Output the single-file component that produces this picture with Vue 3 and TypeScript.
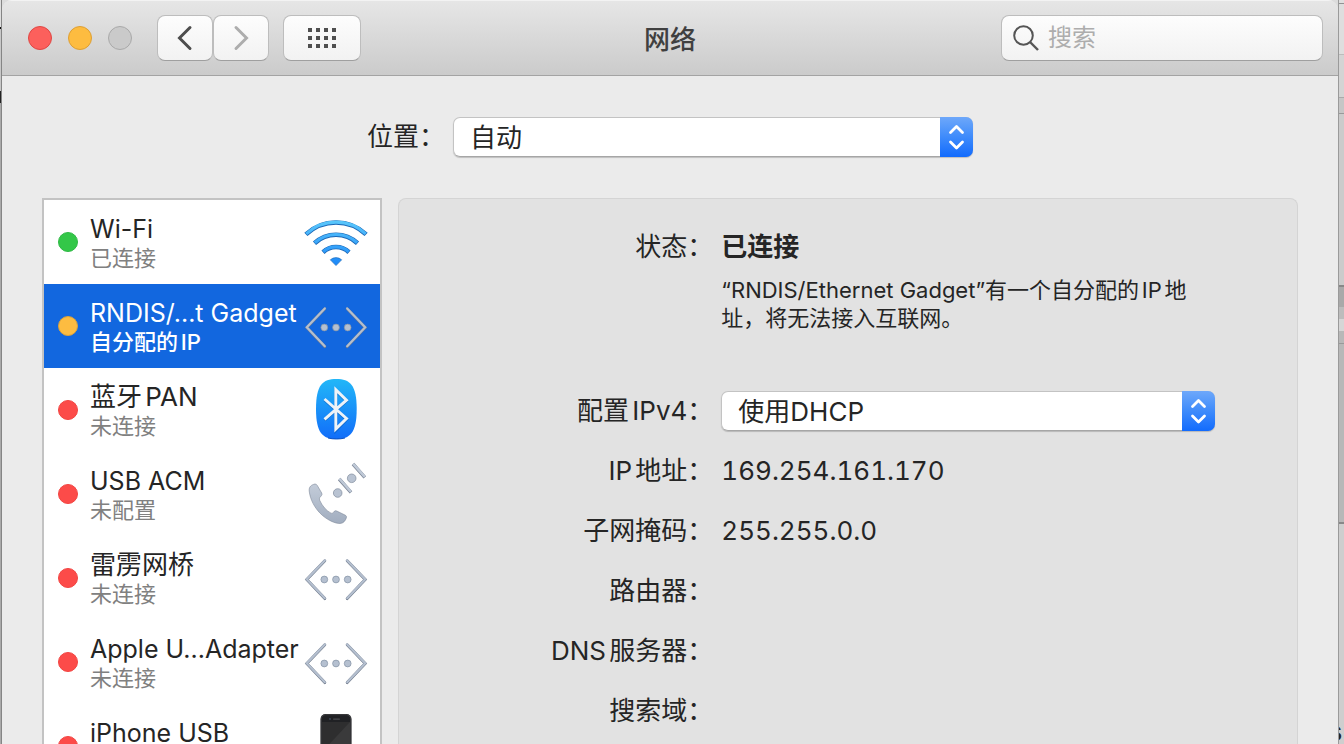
<script setup lang="ts">
import { ref } from 'vue'

type IconName = 'wifi' | 'ethernet' | 'bluetooth' | 'modem' | 'phone'
type Tone = 'green' | 'amber' | 'red'

interface Service {
  id: string
  name: string
  status?: string
  tone: Tone
  icon: IconName
}

interface Field {
  label: string
  value: string
}

const services: Service[] = [
  { id: 'wifi', name: 'Wi-Fi', status: '已连接', tone: 'green', icon: 'wifi' },
  { id: 'rndis', name: 'RNDIS/...t Gadget', status: '自分配的IP', tone: 'amber', icon: 'ethernet' },
  { id: 'pan', name: '蓝牙PAN', status: '未连接', tone: 'red', icon: 'bluetooth' },
  { id: 'acm', name: 'USB ACM', status: '未配置', tone: 'red', icon: 'modem' },
  { id: 'bridge', name: '雷雳网桥', status: '未连接', tone: 'red', icon: 'ethernet' },
  { id: 'adapter', name: 'Apple U...Adapter', status: '未连接', tone: 'red', icon: 'ethernet' },
  { id: 'iphone', name: 'iPhone USB', tone: 'red', icon: 'phone' },
]

const fields: Field[] = [
  { label: 'IP地址：', value: '169.254.161.170' },
  { label: '子网掩码：', value: '255.255.0.0' },
  { label: '路由器：', value: '' },
  { label: 'DNS服务器：', value: '' },
  { label: '搜索域：', value: '' },
]

const isLatin = (text: string): boolean => /^[\x20-\x7e]+$/.test(text)

const selected = ref('rndis')
const place = ref('自动')
const ipv4 = ref('使用DHCP')
const query = ref('')
</script>

<template>
  <div class="desktop">
    <div class="behind behind-left"></div>
    <main class="window">
      <header class="titlebar">
        <div class="controls">
          <div class="lights">
            <button class="light close" type="button" aria-label="关闭"></button>
            <button class="light minimise" type="button" aria-label="最小化"></button>
            <button class="light zoom" type="button" aria-label="缩放" disabled></button>
          </div>
          <div class="nav">
            <button class="tool" type="button" aria-label="后退">
              <svg width="16" height="26" viewBox="0 0 16 26">
                <path d="M13 2.5 2.5 13 13 23.5" fill="none" stroke="#4d4d4d" stroke-width="3" stroke-linecap="round" />
              </svg>
            </button>
            <button class="tool" type="button" aria-label="前进" disabled>
              <svg width="16" height="26" viewBox="0 0 16 26">
                <path d="M3 2.5 13.5 13 3 23.5" fill="none" stroke="#adadad" stroke-width="3" stroke-linecap="round" />
              </svg>
            </button>
          </div>
          <button class="tool wide" type="button" aria-label="显示全部">
            <svg width="28" height="20" viewBox="0 0 28 20" fill="#4f4f4f">
              <template v-for="r in 3" :key="r">
                <rect v-for="c in 4" :key="c" :x="(c - 1) * 8" :y="(r - 1) * 8" width="4" height="4" />
              </template>
            </svg>
          </button>
        </div>
        <h1>网络</h1>
        <label class="search">
          <svg width="26" height="26" viewBox="0 0 26 26" fill="none" stroke="#555">
            <circle cx="10.5" cy="10.5" r="9.3" stroke-width="2" />
            <path d="M17 17 25 25" stroke-width="2.4" />
          </svg>
          <input v-model="query" type="text" placeholder="搜索" aria-label="搜索" />
        </label>
      </header>

      <div class="location">
        <label for="place">位置：</label>
        <div class="popup place">
          <select id="place" v-model="place">
            <option>自动</option>
          </select>
          <span class="stepper">
            <svg width="33" height="40" viewBox="0 0 33 40" fill="none" stroke="#fff" stroke-width="2.8" stroke-linecap="round" stroke-linejoin="round">
              <path d="M10.5 15.5 16.5 9.5 22.5 15.5M10.5 25 16.5 31 22.5 25" />
            </svg>
          </span>
        </div>
      </div>

      <div class="content">
        <ul class="services">
          <li v-for="s in services" :key="s.id">
            <button class="service" type="button" :class="{ active: s.id === selected }" @click="selected = s.id">
              <span class="dot" :class="s.tone"></span>
              <span class="names">
                <span class="name" :class="{ latin: isLatin(s.name) }">{{ s.name }}</span>
                <span v-if="s.status" class="status">{{ s.status }}</span>
              </span>
              <svg class="icon" width="64" height="64" viewBox="0 0 64 64">
                <template v-if="s.icon === 'wifi'">
                  <defs>
                    <linearGradient id="wave" gradientUnits="userSpaceOnUse" x1="0" y1="10" x2="0" y2="56">
                      <stop offset="0" stop-color="#5bc8fb" />
                      <stop offset="1" stop-color="#1a86f8" />
                    </linearGradient>
                  </defs>
                  <g fill="none" stroke="#1b66b4" stroke-width="4.6">
                    <path d="M1.9 24.4A44 44 0 0 1 62.1 24.4M10.5 33.2A31.5 31.5 0 0 1 53.5 33.2M19 42.2A19 19 0 0 1 45 42.2" />
                  </g>
                  <g fill="none" stroke="url(#wave)" stroke-width="3.2">
                    <path d="M2.3 23.9A43.5 43.5 0 0 1 61.7 23.9M10.8 32.7A31.5 31.5 0 0 1 53.200 32.700M19.300 41.700A19 19 0 0 1 44.700 41.700" />
                  </g>
                  <path d="M26.300 49.800A8.500 8.500 0 0 1 37.700 49.800L32 55.600Z" fill="url(#wave)" stroke="#1b66b4" stroke-width=".6" />
                </template>
                <template v-else-if="s.icon === 'ethernet'">
                  <g fill="none" stroke-linecap="round" stroke-linejoin="miter">
                    <path d="M20.800 14.800 2.800 33.600 20.800 52.600M43.200 14.800 61.200 33.600 43.200 52.600" stroke="#6f7a8b" stroke-width="2.900" />
                    <path d="M20.800 14.400 2.800 33.200 20.800 52.200M43.200 14.400 61.200 33.200 43.200 52.200" stroke="#b4bfcf" stroke-width="2.200" />
                  </g>
                  <g fill="#b5c0d0" stroke="#8390a3" stroke-width=".7">
                    <circle cx="20.300" cy="33.500" r="3.400" />
                    <circle cx="32" cy="33.500" r="3.400" />
                    <circle cx="43.700" cy="33.500" r="3.400" />
                  </g>
                </template>
                <template v-else-if="s.icon === 'bluetooth'">
                  <defs>
                    <linearGradient id="pill" x1="0" y1="0" x2="0" y2="1">
                      <stop offset="0" stop-color="#22b7f8" />
                      <stop offset="1" stop-color="#116df9" />
                    </linearGradient>
                  </defs>
                  <path d="M32.300 1C46 1 52.700 7 52.700 31S46 61 32.300 61 12 55 12 31 18.600 1 32.300 1Z" fill="url(#pill)" />
                  <path d="M24 60C29 61.300 36 61.300 41 60" fill="none" stroke="#0b50c0" stroke-width="1" />
                  <path d="M20.500 42.200 42.500 23 31.800 13V52.500L42.500 41.500 20.500 21.800" fill="none" stroke="#0a57b5" stroke-opacity=".55" stroke-width="3" />
                  <path d="M20.500 41.300 42.500 22.200 31.800 11.800V51L42.500 40.500 20.500 21" fill="none" stroke="#eef3f8" stroke-width="2.900" />
                </template>
                <template v-else-if="s.icon === 'modem'">
                  <defs>
                    <linearGradient id="handset" x1="0" y1="0" x2="0" y2="1">
                      <stop offset="0" stop-color="#c3ccd9" />
                      <stop offset="1" stop-color="#a1adbf" />
                    </linearGradient>
                  </defs>
                  <path d="M11 22Q12.500 22 13.300 23.500L17.700 31Q18.500 32.500 17.300 33.800L15.800 35.500Q15 36.700 15.800 38.500C18 43.500 22 48.500 27 51.200Q28.300 51.800 29.300 50.500L30.300 49.300Q31.300 48.300 32.700 49L41.500 53.300Q43 54.300 42.300 56C41.300 58.800 39.500 61.300 36 61.500C31 61.500 24.500 58.500 18.500 53.500C10.500 46.500 6 37 5.200 29C4.800 24.500 7.500 22.800 11 22Z" fill="url(#handset)" stroke="#7e8898" stroke-width=".6" />
                  <g fill="#b9c3d2" stroke="#808b9c" stroke-width=".7">
                    <circle cx="33.700" cy="31" r="4.300" />
                    <circle cx="47.700" cy="16.300" r="4.300" />
                  </g>
                  <g fill="none">
                    <path d="M35.200 17 47 30.300M49 2 60.800 15.300" stroke="#7e8898" stroke-width="3.400" />
                    <path d="M35.400 16.800 47 29.900M49.200 1.900 60.800 14.900" stroke="#bfc9d7" stroke-width="2.400" />
                  </g>
                </template>
                <template v-else>
                  <rect x="16.500" y="0" width="31" height="62" rx="5" fill="#202124" />
                  <rect x="17.200" y=".7" width="29.600" height="60.600" rx="4.500" fill="none" stroke="#4a4b4e" stroke-width=".7" />
                  <rect x="18" y="8" width="28" height="46" fill="#2e2e2f" />
                  <path d="M18 54V38L46 8V54Z" fill="#3a3a3b" />
                  <rect x="29" y="4.500" width="7" height="1.200" rx=".6" fill="#4b4c50" />
                  <circle cx="26" cy="5" r=".9" fill="#3f4a5c" />
                </template>
              </svg>
            </button>
          </li>
        </ul>

        <section class="panel">
          <div class="row">
            <span class="label">状态：</span>
            <strong class="value">已连接</strong>
          </div>
          <p class="note">“RNDIS/Ethernet Gadget”有一个自分配的IP地址，将无法接入互联网。</p>
          <div class="row">
            <label class="label" for="ipv4">配置IPv4：</label>
            <div class="popup">
              <select id="ipv4" v-model="ipv4">
                <option>使用DHCP</option>
              </select>
              <span class="stepper">
                <svg width="33" height="40" viewBox="0 0 33 40" fill="none" stroke="#fff" stroke-width="2.800" stroke-linecap="round" stroke-linejoin="round">
                  <path d="M10.500 15.500 16.500 9.500 22.500 15.500M10.500 25 16.500 31 22.500 25" />
                </svg>
              </span>
            </div>
          </div>
          <div v-for="f in fields" :key="f.label" class="row">
            <span class="label">{{ f.label }}</span>
            <span class="value digits">{{ f.value }}</span>
          </div>
        </section>
      </div>
    </main>
    <div class="behind behind-right"><b>s</b></div>
  </div>
</template>

<style>
body {
  margin: 0;
}
</style>

<style scoped>
.desktop {
  display: grid;
  grid-template-columns: 2px minmax(0, 1fr) 6px;
  height: 100vh;
  overflow: hidden;
  background: #dcdcdc;
  font-family: Inter, "Noto Sans CJK SC", sans-serif;
  font-size: 26px;
  line-height: 40px;
  color: #252525;
  text-autospace: normal;
  text-spacing-trim: space-all;
}

.desktop * {
  box-sizing: border-box;
}

button,
input,
select {
  font: inherit;
  color: inherit;
  text-autospace: inherit;
}

.behind-left {
  border-right: 1px solid #858585;
  background: linear-gradient(#dedede 27px, #111 27px 29px, #c8c8c8 29px 91px, #222 91px 103px, #aaa 103px);
}

.behind-right {
  display: flex;
  align-items: flex-end;
  justify-content: flex-end;
  overflow: hidden;
  border-left: 1px solid #9a9a9a;
  background: linear-gradient(#e0e0e0 3px, #929292 3px 4px, #dedede 4px 54px, #bcbcbc 54px 55px, #d4d4d4 55px 97px, #aaa 97px 98px, #c6c6c6 98px 113px, #999 113px 114px, #cbcbcb 114px 285px, #888 285px 287px, #a9a9a9 287px 307px, #bcbcbc 307px 319px, #d6d6d6 319px 331px, #b8b8b8 331px 343px, #999 343px 344px, #b8b8b8 344px 522px, #888 522px 524px, #cecece 524px);
}

.behind-right b {
  padding-right: 2px;
  line-height: 24px;
}

.window {
  display: flex;
  flex-direction: column;
  overflow: hidden;
  border-radius: 10px 10px 0 0;
  background: #ebebeb;
}

.titlebar {
  flex: none;
  display: grid;
  grid-template-columns: 1fr auto 1fr;
  align-items: center;
  height: 76px;
  padding: 0 15px;
  border-top: 1px solid #f3f3f3;
  border-bottom: 1px solid #a3a3a3;
  background: linear-gradient(#e6e6e6, #cbcbcb);
}

.controls,
.lights,
.nav {
  display: flex;
  align-items: center;
}

.lights {
  gap: 16px;
  margin: 0 25px 0 11px;
}

.light {
  width: 24px;
  height: 24px;
  padding: 0;
  border: 1px solid #a9a9a9;
  border-radius: 50%;
  background: #cacaca;
}

.close {
  border-color: #df4744;
  background: #fc605c;
}

.minimise {
  border-color: #dd9f34;
  background: #fdbc40;
}

.nav {
  margin-right: 14px;
}

.tool {
  display: flex;
  align-items: center;
  justify-content: center;
  width: 56px;
  height: 46px;
  padding: 0;
  border: 1px solid #bdbdbd;
  border-bottom-color: #9f9f9f;
  border-radius: 8px;
  background: linear-gradient(#fdfdfd, #f2f2f2);
}

.tool.wide {
  width: 78px;
}

h1 {
  margin: 0;
  padding-top: 3px;
  font-size: 26px;
  font-weight: 500;
  line-height: 40px;
  color: #404040;
}

.search {
  justify-self: end;
  display: flex;
  align-items: center;
  gap: 9px;
  width: 322px;
  height: 46px;
  padding: 0 11px;
  border: 1px solid #bdbdbd;
  border-bottom-color: #9f9f9f;
  border-radius: 8px;
  background: linear-gradient(#fdfdfd, #f2f2f2);
}

.search svg {
  flex: none;
}

.search input {
  flex: 1;
  min-width: 0;
  height: 40px;
  padding: 0;
  border: 0;
  outline: 0;
  background: none;
  font-size: 24px;
}

.search input::placeholder {
  color: #adadad;
}

.location {
  flex: none;
  display: flex;
  justify-content: center;
  gap: 8px;
  padding: 41px 0;
}

.popup {
  position: relative;
  flex: 1;
  max-width: 494px;
  height: 40px;
  border-radius: 7px;
  box-shadow: 0 1px 1px #00000030;
}

.popup.place {
  flex: none;
  width: 520px;
  max-width: none;
}

.popup select {
  appearance: none;
  width: 100%;
  height: 40px;
  padding: 0 40px 0 16px;
  border: 1px solid #c3c3c3;
  border-bottom-color: #a6a6a6;
  border-radius: 7px;
  background: #fff;
}

.stepper {
  position: absolute;
  top: 0;
  right: 0;
  display: flex;
  border-radius: 0 7px 7px 0;
  background: linear-gradient(#6ea8fa, #3e8bfb 50%, #126bfd);
  pointer-events: none;
}

.content {
  flex: 1;
  display: flex;
  gap: 16px;
  min-height: 0;
  padding: 0 40px;
}

.services {
  flex: none;
  width: 340px;
  margin: 0;
  padding: 0;
  overflow: hidden;
  border: 2px solid #c3c3c3;
  border-bottom: 0;
  background: #fff;
  list-style: none;
}

.service {
  display: flex;
  align-items: center;
  gap: 12px;
  width: 100%;
  height: 84px;
  padding: 0 12px 0 14px;
  border: 0;
  background: none;
  text-align: left;
}

.dot {
  flex: none;
  width: 20px;
  height: 20px;
  border-radius: 50%;
}

.green {
  border: 1px solid #2fb945;
  background: #33c748;
}

.amber {
  border: 1px solid #d9a23d;
  background: #fdbc41;
}

.red {
  border: 1px solid #f24542;
  background: #fc4b49;
}

.names {
  flex: 1;
  align-self: flex-start;
  display: flex;
  flex-direction: column;
  min-width: 0;
  padding-top: 14px;
  white-space: nowrap;
}

.name {
  font-size: 26px;
  line-height: 30px;
}

.name.latin {
  font-size: 25px;
}

.status {
  font-size: 22px;
  line-height: 28px;
  color: #808080;
}

.active {
  background: #1267df;
}

.active .name,
.active .status {
  color: #fff;
}

.active .status {
  font-weight: 500;
}

.icon {
  flex: none;
}

.panel {
  flex: 1;
  display: flex;
  flex-direction: column;
  gap: 20px;
  min-width: 0;
  padding-top: 28px;
  border: 1px solid #d4d4d4;
  border-bottom: 0;
  border-radius: 8px 8px 0 0;
  background: #e2e2e2;
}

.row {
  display: flex;
  gap: 8px;
}

.label {
  flex: none;
  width: 35%;
  text-align: right;
  white-space: nowrap;
}

.value {
  flex: 1;
}

.digits {
  font-variant-numeric: tabular-nums;
}

.note {
  max-width: 494px;
  min-height: 84px;
  margin: -11px 0 11px;
  padding-left: calc(35% + 8px);
  box-sizing: content-box;
  font-size: 22px;
  line-height: 28px;
}
</style>
